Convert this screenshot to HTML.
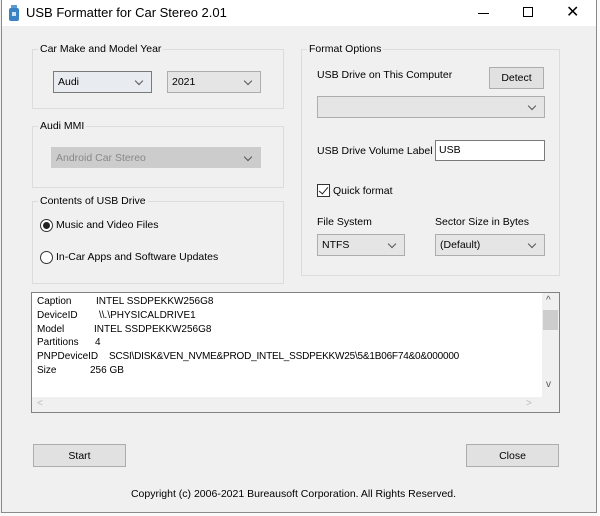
<!DOCTYPE html>
<html><head><style>
*{box-sizing:border-box;margin:0;padding:0}
body{width:600px;height:516px;background:#fafafa;position:relative;overflow:hidden;font-family:"Liberation Sans",Arial,sans-serif;font-size:10.5px;color:#000}
.win{position:absolute;left:0;top:0;width:597px;height:513px;background:#f0f0f0}
.bl{position:absolute;background:#8a8a8a}
.title{position:absolute;left:2px;top:0;width:594px;height:26px;background:#fff}
.a{position:absolute;white-space:nowrap}
.grp{position:absolute;border:1px solid #dcdcdc}
.lbl{position:absolute;background:#f0f0f0;padding:0 2px;top:-7px;left:5px}
.cb{position:absolute;background:#e5e5e5;border:1px solid #adadad;padding:4px 0 0 4px}
.cb::after{content:"";position:absolute;right:9px;top:6px;width:5px;height:5px;border-right:1px solid #555;border-bottom:1px solid #555;transform:rotate(45deg)}
.btn{position:absolute;background:#e1e1e1;border:1px solid #adadad;text-align:center}
</style></head><body>
<div class="win">
<div class="bl" style="left:1px;top:0;width:1px;height:513px"></div>
<div class="bl" style="left:596px;top:0;width:1px;height:513px"></div>
<div class="bl" style="left:1px;top:512px;width:596px;height:1px"></div>
<div class="title">
<svg class="a" style="left:7px;top:5px" width="10" height="16"><rect x="2" y="0" width="6" height="4" fill="#5b9bd5"/><rect x="0" y="3" width="10" height="13" rx="2" fill="#3b82c4"/><rect x="3" y="7" width="4" height="4" fill="#cfe5f7"/></svg>
<div class="a" style="left:24px;top:5px;font-size:13px">USB Formatter for Car Stereo 2.01</div>
<div class="a" style="left:476px;top:13px;width:11px;height:1px;background:#000"></div>
<div class="a" style="left:521px;top:7px;width:10px;height:10px;border:1px solid #000"></div>
<div class="a" style="left:564px;top:2px;font-size:16px">✕</div>
</div>
<div class="grp" style="left:32px;top:49px;width:252px;height:60px"><span class="lbl">Car Make and Model Year</span></div>
<div class="cb" style="left:53px;top:71px;width:99px;height:22px;background:#e8ecf0;border-color:#7a7a7a">Audi</div>
<div class="cb" style="left:167px;top:71px;width:94px;height:22px">2021</div>
<div class="grp" style="left:32px;top:126px;width:252px;height:62px"><span class="lbl">Audi MMI</span></div>
<div class="cb" style="left:51px;top:147px;width:210px;height:21px;background:#ccc;border-color:#ccc;color:#888">Android Car Stereo</div>
<div class="grp" style="left:32px;top:201px;width:252px;height:83px"><span class="lbl">Contents of USB Drive</span></div>
<div class="a" style="left:40px;top:219px;width:13px;height:13px;border:1px solid #333;border-radius:50%;background:#fff"><div style="position:absolute;left:2px;top:2px;width:7px;height:7px;border-radius:50%;background:#222"></div></div>
<div class="a" style="left:56px;top:219px">Music and Video Files</div>
<div class="a" style="left:40px;top:251px;width:13px;height:13px;border:1px solid #333;border-radius:50%;background:#fff"></div>
<div class="a" style="left:56px;top:251px">In-Car Apps and Software Updates</div>
<div class="grp" style="left:301px;top:49px;width:259px;height:227px"><span class="lbl">Format Options</span></div>
<div class="a" style="left:317px;top:69px">USB Drive on This Computer</div>
<div class="btn" style="left:489px;top:67px;width:55px;height:22px;padding-top:4px">Detect</div>
<div class="cb" style="left:317px;top:96px;width:228px;height:22px"></div>
<div class="a" style="left:317px;top:145px">USB Drive Volume Label</div>
<div class="a" style="left:435px;top:140px;width:110px;height:21px;background:#fff;border:1px solid #7a7a7a;padding:3px 0 0 3px">USB</div>
<div class="a" style="left:317px;top:184px;width:13px;height:13px;border:1px solid #333;background:#fff"><div style="position:absolute;left:3px;top:0px;width:5px;height:9px;border-right:1.5px solid #222;border-bottom:1.5px solid #222;transform:rotate(40deg)"></div></div>
<div class="a" style="left:333px;top:185px">Quick format</div>
<div class="a" style="left:317px;top:216px">File System</div>
<div class="a" style="left:435px;top:216px">Sector Size in Bytes</div>
<div class="cb" style="left:317px;top:234px;width:88px;height:22px">NTFS</div>
<div class="cb" style="left:435px;top:234px;width:110px;height:22px">(Default)</div>
<div class="a" style="left:31px;top:292px;width:529px;height:121px;background:#fff;border:1px solid #828282">
<div style="position:absolute;left:0;top:104px;width:510px;height:15px;background:#f0f0f0;color:#bbb;font-size:10px"><span style="position:absolute;left:5px;top:1px">&lt;</span><span style="position:absolute;left:494px;top:1px">&gt;</span></div>
<div style="position:absolute;left:510px;top:0;width:17px;height:119px;background:#f0f0f0;font-size:10px;color:#555"><span style="position:absolute;left:4px;top:2px">^</span><div style="position:absolute;left:1px;top:17px;width:15px;height:20px;background:#cdcdcd"></div><span style="position:absolute;left:4px;top:86px">v</span></div>
<div style="position:absolute;left:5px;top:2px;line-height:13.8px;font-size:10px">
<div>Caption<span class="a" style="left:59px">INTEL SSDPEKKW256G8</span></div>
<div>DeviceID<span class="a" style="left:62px">\\.\PHYSICALDRIVE1</span></div>
<div>Model<span class="a" style="left:57px">INTEL SSDPEKKW256G8</span></div>
<div>Partitions<span class="a" style="left:58px">4</span></div>
<div>PNPDeviceID<span class="a" style="left:72px;letter-spacing:-0.2px">SCSI\DISK&amp;VEN_NVME&amp;PROD_INTEL_SSDPEKKW25\5&amp;1B06F74&amp;0&amp;000000</span></div>
<div>Size<span class="a" style="left:53px">256 GB</span></div>
</div></div>
<div class="btn" style="left:33px;top:444px;width:93px;height:23px;padding-top:5px">Start</div>
<div class="btn" style="left:466px;top:444px;width:93px;height:23px;padding-top:5px">Close</div>
<div class="a" style="left:0;width:587px;top:488px;text-align:center">Copyright (c) 2006-2021 Bureausoft Corporation. All Rights Reserved.</div>
</div>
</body></html>
